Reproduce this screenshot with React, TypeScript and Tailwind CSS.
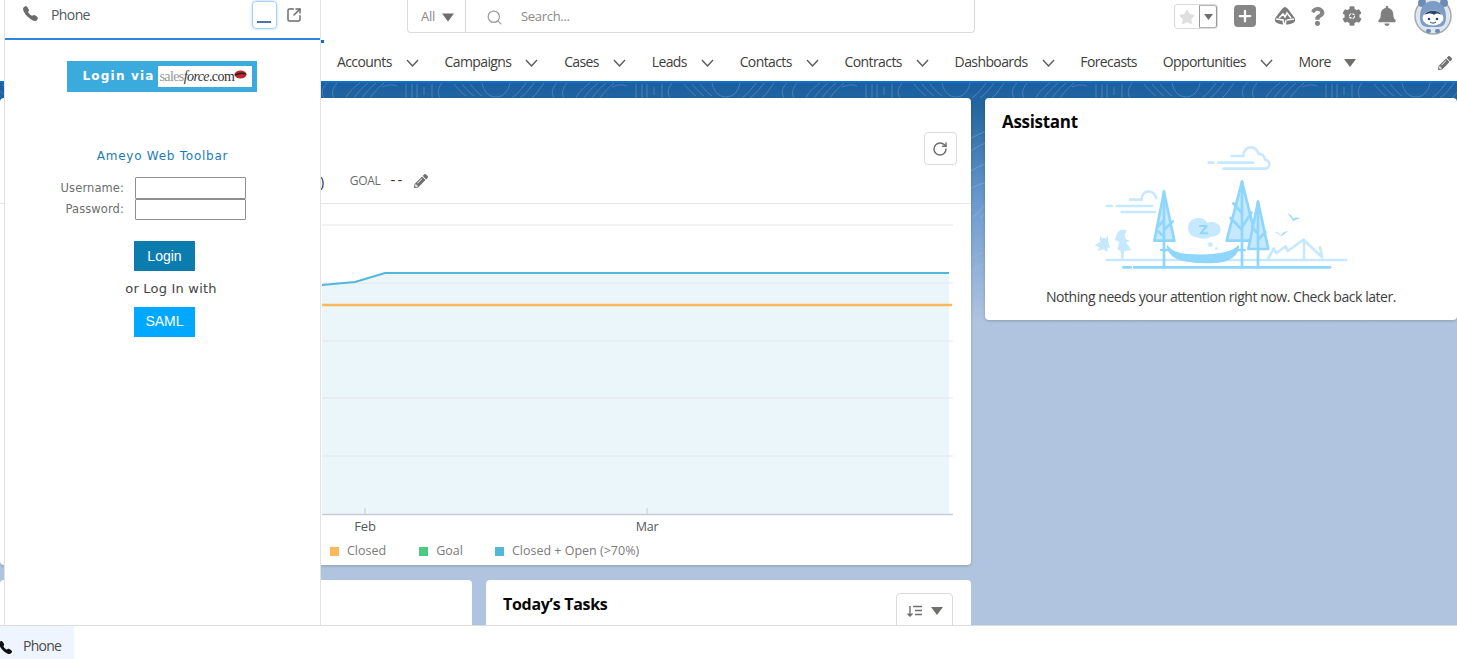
import React from "react";
import { Plus, RotateCw, Search, SquareArrowOutUpRight } from "lucide-react";
import { FaBell, FaCog, FaPencilAlt, FaQuestion, FaStar } from "react-icons/fa";
import { IoCall } from "react-icons/io5";

const Tri = ({ w = 12, h = 8, c = "#706e6b" }: { w?: number; h?: number; c?: string }) => (
  <svg width={w} height={h} viewBox="0 0 12 8" className="shrink-0"><path d="M0 0h12L6 8z" fill={c} /></svg>
);

const Chev = () => (
  <svg width="13" height="8" viewBox="0 0 13 8" fill="none" stroke="#5c5c5c" strokeWidth="1.400" className="mt-[3px] shrink-0"><path d="M1 1l5.500 6L12 1" /></svg>
);

const nav: [string, boolean][] = [
  ["Accounts", true], ["Campaigns", true], ["Cases", true], ["Leads", true], ["Contacts", true],
  ["Contracts", true], ["Dashboards", true], ["Forecasts", false], ["Opportunities", true],
];

const Trailhead = () => (
  <svg width="22" height="20" viewBox="0 0 22 20">
    <path d="M11 1c1 0 2 1 3 2l6 8c2 3 1 5-1 6-5 2-11 2-16 0-2-1-3-3-1-6l6-8c1-1 2-2 3-2z" fill="#7b7b7b" />
    <path d="M5 12l4-4 2 3 2-4 4 5M2 13l7 1 1 5M13 14l7-1M12 14l-1 5" stroke="#fff" strokeWidth="1.5" fill="none" />
  </svg>
);

const Avatar = () => (
  <svg width="38" height="38" viewBox="0 0 38 38" className="shrink-0">
    <circle cx="19" cy="19" r="18" fill="#dfe6ee" stroke="#a3aab3" strokeWidth="1.5" />
    <circle cx="8" cy="6" r="4" fill="#6d8cb5" />
    <circle cx="30" cy="6" r="4" fill="#6d8cb5" />
    <path d="M6 20C6 9 12 4 19 4s13 5 13 16-6 10-13 10-13 1-13-10z" fill="#7d9dc7" />
    <ellipse cx="19" cy="21" rx="10.5" ry="7.5" fill="#fff" />
    <path d="M10 18c3-5 14-6 18 0-4-2-6-2-8 0-2-2-6-2-10 0z" fill="#2f4666" />
    <circle cx="15" cy="22" r="1.3" fill="#2f4666" />
    <circle cx="23" cy="22" r="1.3" fill="#2f4666" />
    <path d="M16 25c2 1.500 4 1.500 6 0" stroke="#2f4666" strokeWidth="1" fill="none" />
    <rect x="12" y="32" width="5" height="4" rx="2" fill="#6d8cb5" />
    <rect x="21" y="32" width="5" height="4" rx="2" fill="#6d8cb5" />
  </svg>
);

const Illustration = () => {
  const L = "#c7e9ff";
  const D = "#8fd6fc";
  return (
    <svg width="280" height="140" viewBox="0 0 840 420" fill="none" strokeLinecap="round" strokeLinejoin="round">
      <g stroke={L} strokeWidth="8">
        <path d="M455 48h35c0-16 10-26 22-26 12 0 20 8 24 20 10-2 18 6 18 16 8 2 14 8 14 14 0 8-5 14-12 14H430M386 68h14M415 68h104" />
        <path d="M150 179h35c0-14 8-25 20-25 10 0 20 8 24 20M80 198h16M110 198h106M125 216h100" />
        <path d="M80 360h718" />
        <path d="M565 355l16-30 8 14 28-20 6 14 48-34 52 50M672 300v58M720 322l6 30" />
      </g>
      <path d="M60 286l6 8h12l6-8v16l6 20-8 2 2 12-14-8-18 6 6-12-14-6 16-10z" fill={L} />
      <path d="M112 278c8-10 20-12 28-6l-6 12 4 14 14 6-14 2 16 24-22 4-2 28h-6l-2-28-10-6 6-22-14-6z" fill={L} />
      <path d="M324 262c0-18 18-30 36-28 8 0 16 6 22 14 14-6 40 0 40 20 0 16-16 24-30 22-10 8-30 8-42 2-16 0-26-14-26-30z" fill={L} />
      <path d="M360 258h20l-18 22h20" stroke={D} strokeWidth="6" />
      <circle cx="391" cy="314" r="7" fill={L} />
      <circle cx="409" cy="326" r="4" fill={L} />
      <path d="M622 220c8 2 14 8 18 16 4-4 12-6 20 0-8 0-14 4-20 8-4-8-12-16-18-24zM584 276c8 0 14 4 18 10 4-6 12-12 22-14-6 6-12 12-20 16-6-4-14-8-20-12z" fill={D} opacity=".85" />
      <path d="M252 155l-29 147h60z" fill={L} stroke={D} strokeWidth="8" />
      <path d="M486 125l-46 177h90z" fill={L} stroke={D} strokeWidth="8" />
      <path d="M534 185l-29 142h60z" fill={L} stroke={D} strokeWidth="8" />
      <g stroke={D} strokeWidth="8">
        <path d="M252 155v222M252 240l-20 22M252 270l26-26M252 290l-18-16" />
        <path d="M486 125v252M486 220l-26 -30M486 262l28-44M486 270l-34-36" />
        <path d="M534 185v192M534 282l-18-22M534 300l22-24" />
        <path d="M243 330h28M466 330h28" />
        <path d="M130 382h22M162 382h588" />
      </g>
      <path d="M262 318c10 16 36 24 64 26 44 3 80 1 110-6 16-4 30-10 39-20 0 22-20 44-60 48-34 3-70 3-100-4-34-6-50-24-53-44z" fill={D} stroke={D} strokeWidth="4" />
    </svg>
  );
};

const Pattern = () => (
  <svg className="absolute left-0 top-0 w-full h-[300px] pointer-events-none" aria-hidden="true">
    <defs>
      <pattern id="topo" x="90" width="230" height="120" patternUnits="userSpaceOnUse">
        <g fill="none" stroke="#cfe2f7" strokeWidth="0.8" opacity="0.3">
          <path d="M4 15c-3-5-2-10 3-15M14 15c-3-5-1-10 3-15M26 15c2-5 8-11 14-15M34 15c3-5 9-11 14-15M42 15c3-5 9-11 14-15M50 15c3-5 9-11 14-15" />
          <path d="M62 4c5-2 10-3 15-1M86 1v14M92 1v14M97 1v14M104 4v8M112 1v14M120 15c-3-5-2-10 2-15" />
          <path d="M134 1c5 6 8 9 12 12M142 1c5 6 8 9 12 12M150 1c5 6 8 9 12 12M162 0c2 10 8 14 14 14s12-4 14-14M192 15c6-4 10-10 14-15M200 15c6-4 10-10 14-15M212 15c5-4 8-10 12-15" />
          <path d="M0 70c20-20 50-24 80 4s60 34 90 10 40-30 60-24M0 90c24-20 50-18 76 6s66 30 96 6 40-26 58-18M0 50c18-14 50-20 84 10s60 28 84 10 44-26 62-26M0 108c22-14 48-14 72 8s70 24 100 2 40-22 58-14" />
        </g>
      </pattern>
      <linearGradient id="fade" x1="0" y1="0" x2="0" y2="1">
        <stop offset="0.3" stopColor="#fff" />
        <stop offset="1" stopColor="#000" />
      </linearGradient>
      <mask id="fm"><rect width="100%" height="100%" fill="url(#fade)" /></mask>
    </defs>
    <rect width="100%" height="100%" fill="url(#topo)" mask="url(#fm)" />
  </svg>
);

const Chart = () => (
  <svg width="971" height="332" viewBox="0 0 971 332" className="block shrink-0 font-['Open_Sans',sans-serif]">
    <path d="M322 81L355 78L385 69H949V310H322Z" fill="#ebf6fa" />
    {[21, 79, 137, 194, 252].map((y) => (
      <path key={y} d={`M322 ${y}H953`} stroke="#e4e6e8" strokeWidth="1" />
    ))}
    <path d="M322 310.500H953" stroke="#c9ccd0" strokeWidth="1.500" />
    <path d="M365 304v6M647 304v6" stroke="#c9ccd0" />
    <path d="M322 81L355 78L385 69H949" stroke="#52b7d9" strokeWidth="2" fill="none" />
    <path d="M322 101H952" stroke="#fcb95b" strokeWidth="2.500" />
    <text x="365" y="327" textAnchor="middle" fontSize="13" letterSpacing="-0.2" fill="#54585c">Feb</text>
    <text x="647" y="327" textAnchor="middle" fontSize="12.500" fill="#54585c">Mar</text>
  </svg>
);

export default function App() {
  return (
    <div className="relative flex h-[659px] w-[1457px] flex-col overflow-hidden bg-white font-['Open_Sans',sans-serif] text-[14px] tracking-[-0.3px] text-[#3e3e3c]">
      <header className="flex h-[45px] shrink-0 items-start bg-white pl-[407px] pr-[5px]">
        <div className="flex h-[33px] w-[568px] items-center rounded-b-[4px] border border-t-0 border-[#dddbda] pt-[2px] text-[13px] text-[#8a8a8a]">
          <div className="-mt-[2px] flex h-[33px] w-[58px] items-center gap-[7px] border-r border-[#dddbda] pl-[13px] pt-[2px]">
            All <Tri w={12} h={9} />
          </div>
          <Search size={17} strokeWidth={1.7} className="ml-[20px] text-[#9a9a9a]" />
          <span className="ml-[18px]">Search...</span>
        </div>
        <div className="ml-auto flex items-start">
          <div className="mt-[4px] flex h-[25px] w-[44px] rounded-[3px] border border-[#dddbda]">
            <div className="flex w-[24px] items-center justify-center"><FaStar size={16} color="#dfdfdf" /></div>
            <div className="flex flex-1 items-center justify-center rounded-r-[3px] border border-[#9a9a9a] border-y-[#b5b5b5]"><Tri w={9} h={6} /></div>
          </div>
          <div className="ml-[16px] mt-[5px] flex h-[22px] w-[22px] items-center justify-center rounded-[4px] bg-[#868686]">
            <Plus size={18} strokeWidth={3} color="#fff" />
          </div>
          <div className="ml-[18px] mt-[6px]"><Trailhead /></div>
          <div className="ml-[12px] mt-[7px]"><FaQuestion size={19} color="#868686" /></div>
          <div className="relative ml-[15px] mt-[6px]">
            <FaCog size={20} color="#7f7f7f" />
            <svg width="8" height="10" viewBox="0 0 8 10" className="absolute left-[6px] top-[5px]"><path d="M5 0L1 6h2.500L3 10l4-6H4.500z" fill="#7f7f7f" /></svg>
          </div>
          <div className="ml-[15px] mt-[6px]"><FaBell size={20} color="#7f7f7f" /></div>
          <div className="ml-[17px] -mt-[3px]"><Avatar /></div>
        </div>
      </header>

      <nav className="relative flex h-[36px] shrink-0 items-center gap-[25.750px] bg-white pb-[4px] pl-[337px] pr-[5px] tracking-[-0.6px]">
        <span className="absolute left-[321px] top-[-5px] h-[3px] w-[3px] bg-[#0d6fd0]" />
        {nav.map(([label, chev]) => (
          <div key={label} className="flex items-center gap-[14px] whitespace-nowrap">
            <span>{label}</span>
            {chev && <Chev />}
          </div>
        ))}
        <div className="flex items-center gap-[13px]">
          <span>More</span>
          <span className="mt-[3px]"><Tri w={12} h={8} /></span>
        </div>
        <FaPencilAlt size={14} color="#6f6f6f" className="ml-auto mt-[3px]" />
      </nav>

      <main className="relative flex min-h-0 flex-1 gap-[14px] overflow-hidden border-t-2 border-[#0d6fd0] bg-[linear-gradient(#1b5ea0_0px,#27699f_30px,#6b9acf_118px,#b0c4df_240px)] pt-[15px]">
        <Pattern />
        <div className="relative flex w-[971px] shrink-0 flex-col gap-[15px]">
          <section className="flex h-[467px] shrink-0 flex-col rounded-[4px] bg-white shadow-[0_1px_3px_rgba(0,0,0,0.2)]">
            <div className="h-[106px] shrink-0 border-b border-[#e4e6e8]">
              <div className="flex justify-end pr-[14px] pt-[34px]">
                <button className="flex h-[33px] w-[33px] items-center justify-center rounded-[4px] border border-[#dddbda] bg-white">
                  <RotateCw size={16} strokeWidth={2.2} color="#706e6b" className="-ml-[1px]" />
                </button>
              </div>
              <div className="mt-[8px] flex h-[16px] items-center pl-[320px]">
                <span className="text-[14px] text-[#16325c]">)</span>
                <span className="ml-[26px] text-[12px] text-[#6b6b6b]">GOAL</span>
                <span className="ml-[10px] -mt-[3px] text-[15px] tracking-[2px] text-[#333]">--</span>
                <FaPencilAlt size={14} color="#6f6f6f" className="ml-[10px]" />
              </div>
            </div>
            <Chart />
            <div className="flex flex-1 items-start pl-[330px] pt-[6px] text-[12.5px] tracking-normal text-[#7b7b7b]">
              <i className="mt-[5px] h-[9px] w-[9px] bg-[#fcb95b]" /><span className="ml-[8px]">Closed</span>
              <i className="ml-[33px] mt-[5px] h-[9px] w-[9px] bg-[#4bca81]" /><span className="ml-[8px]">Goal</span>
              <i className="ml-[32px] mt-[5px] h-[9px] w-[9px] bg-[#52b7d9]" /><span className="ml-[8px]">Closed + Open (&gt;70%)</span>
            </div>
          </section>
          <div className="flex flex-1 gap-[14px]">
            <section className="h-[100px] w-[472px] shrink-0 rounded-[4px] bg-white" />
            <section className="h-[100px] w-[485px] shrink-0 rounded-[4px] bg-white pl-[17px] pr-[18px] pt-[13px]">
              <div className="flex items-start justify-between">
                <h2 className="-mt-[1px] text-[16px] font-bold text-[#080707]">Today’s Tasks</h2>
                <button className="flex h-[36px] w-[57px] items-center justify-center gap-[9px] rounded-[4px] border border-[#dddbda]">
                  <svg width="15" height="14" viewBox="0 0 15 14" fill="none" stroke="#706e6b" strokeWidth="1.400"><path d="M6 2.500h9M8 6.500h7M8 10.500h7M3 2v10M0.500 9.500L3 12l2.500-2.500" /></svg>
                  <Tri w={12} h={8} />
                </button>
              </div>
            </section>
          </div>
        </div>
        <section className="relative flex h-[222px] w-[472px] shrink-0 flex-col rounded-[4px] bg-white shadow-[0_1px_3px_rgba(0,0,0,0.2)]">
          <h2 className="pl-[17px] pt-[12px] text-[17px] font-bold leading-[24px] text-[#080707]">Assistant</h2>
          <div className="ml-[95px] mt-[6px] h-[140px]"><Illustration /></div>
          <p className="mt-[6px] text-center text-[14px] tracking-[-0.45px] text-[#3e3e3c]">Nothing needs your attention right now. Check back later.</p>
        </section>
      </main>

      <footer className="flex h-[34px] shrink-0 border-t border-[#dcdcdc] bg-white shadow-[0_-1px_3px_rgba(0,0,0,0.1)]">
        <div className="relative flex w-[74px] items-center overflow-hidden bg-[#eef5fe] pl-[23px] pt-[5px]">
          <IoCall size={15} color="#111" className="absolute left-[-2px] top-[14px]" />
          <span className="text-[14px] tracking-[-0.75px] text-[#4a4a4a]">Phone</span>
        </div>
      </footer>

      <aside className="absolute left-[4px] top-0 flex h-[625px] w-[317px] flex-col border-x border-[#e2e2e2] bg-white">
        <div className="flex h-[40px] shrink-0 items-center border-b-2 border-[#2f86d8] pb-[8px] pl-[17px]">
          <IoCall size={17} color="#6b6b6b" className="-mt-[4px]" />
          <span className="ml-[12px] -mt-[2px] text-[14px] tracking-[-0.6px] text-[#54585c]">Phone</span>
          <button className="ml-[162px] flex h-[28px] w-[25px] items-end justify-center rounded-[4px] border border-[#a8d0f2] pb-[5px] shadow-[0_0_3px_#a8d0f2]">
            <span className="h-[2px] w-[14px] bg-[#4a74ac]" />
          </button>
          <SquareArrowOutUpRight size={16} strokeWidth={2.2} color="#6b6b6b" className="ml-[9px] -mt-[1px]" />
        </div>
        <div className="flex flex-col items-center">
          <div className="ml-[-2px] mt-[21px] flex h-[31px] w-[190px] items-center bg-[#3aabdc] pl-[16px] pr-[5px]">
            <span className="-mt-[2px] whitespace-nowrap font-['DejaVu_Sans',sans-serif] text-[12px] font-bold tracking-[1.2px] text-white">Login via</span>
            <div className="ml-auto flex h-[21px] w-[94px] items-center bg-white pl-[2px]">
              <span className="whitespace-nowrap font-['Liberation_Serif',serif] text-[14px] tracking-[-0.6px] text-[#333]"><span className="text-[#999]">sales</span><span className="italic">force</span>.com</span>
              <svg width="13" height="9" viewBox="0 0 13 9" className="-mt-[5px] shrink-0"><ellipse cx="6.500" cy="4.500" rx="6" ry="4" fill="#c0272d" /><path d="M1 5c4-2 8-2 11-1" stroke="#222" strokeWidth="1.500" fill="none" /></svg>
            </div>
          </div>
          <h1 className="mt-[55px] font-['DejaVu_Sans',sans-serif] text-[12px] tracking-[0.75px] text-[#1b7cb3]">Ameyo Web Toolbar</h1>
          <div className="mt-[12px] grid w-full grid-cols-[119px_111px] items-center gap-x-[11px] font-['DejaVu_Sans',sans-serif] text-[11.5px] tracking-[0.1px] text-[#6e6e6e]">
            <label className="pt-[2px] text-right">Username:</label>
            <input className="h-[21.500px] rounded-[1px] border border-[#8e8e8e] bg-white" />
            <label className="pt-[1px] text-right">Password:</label>
            <input className="h-[21.500px] rounded-[1px] border border-[#8e8e8e] bg-white" />
          </div>
          <div className="ml-[4px] mt-[21px] flex h-[30px] w-[61px] items-center justify-center bg-[#0c7bad] font-['Liberation_Sans',sans-serif] text-[14px] tracking-normal text-white">Login</div>
          <div className="ml-[17px] mt-[8px] font-['DejaVu_Sans',sans-serif] text-[13px] tracking-[0.2px] text-[#444]">or Log In with</div>
          <div className="ml-[4px] mt-[8px] flex h-[30px] w-[61px] items-center justify-center bg-[#00a9ff] font-['Liberation_Sans',sans-serif] text-[14px] tracking-normal text-white">SAML</div>
        </div>
      </aside>
    </div>
  );
}
